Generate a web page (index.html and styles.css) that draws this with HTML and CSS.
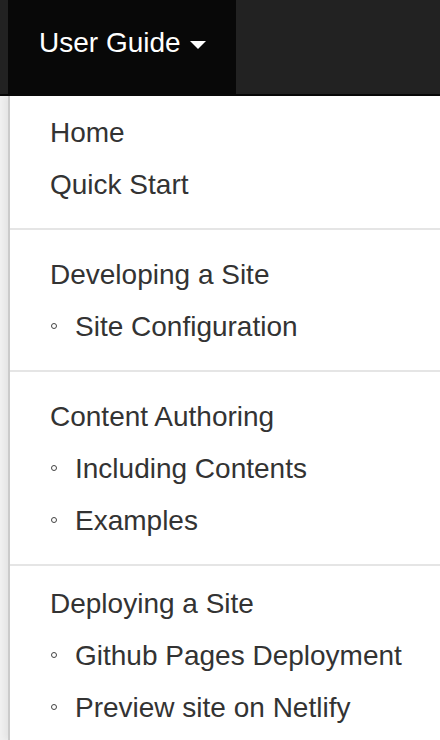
FILE: index.html
```html
<!DOCTYPE html>
<html lang="en">
<head>
<meta charset="utf-8">
<title>User Guide</title>
<link rel="stylesheet" href="styles.css">
</head>
<body>
<header class="navbar">
  <div class="nav-item nav-item--active">
    <a class="nav-link" href="#">User Guide <span class="caret"></span></a>
  </div>
</header>
<ul class="dropdown">
  <li><a class="dropdown-link" href="#">Home</a></li>
  <li><a class="dropdown-link" href="#">Quick Start</a></li>
  <li class="divider"></li>
  <li><a class="dropdown-link" href="#">Developing a Site</a></li>
  <li><a class="dropdown-link" href="#"><span class="bullet"></span>Site Configuration</a></li>
  <li class="divider"></li>
  <li><a class="dropdown-link" href="#">Content Authoring</a></li>
  <li><a class="dropdown-link" href="#"><span class="bullet"></span>Including Contents</a></li>
  <li><a class="dropdown-link" href="#"><span class="bullet"></span>Examples</a></li>
  <li class="divider divider--tight"></li>
  <li><a class="dropdown-link" href="#">Deploying a Site</a></li>
  <li><a class="dropdown-link" href="#"><span class="bullet"></span>Github Pages Deployment</a></li>
  <li><a class="dropdown-link" href="#"><span class="bullet"></span>Preview site on Netlify</a></li>
</ul>
</body>
</html>
```
FILE: styles.css
```css
html, body {
  margin: 0;
  padding: 0;
}
html {
  overflow: hidden;
}
body {
  background: #f1f1f1;
  font-family: "Liberation Sans", Arial, Helvetica, sans-serif;
  font-size: 28px;
  line-height: 40px;
  color: #333;
  overflow: hidden;
  height: 740px;
}
.navbar {
  display: flex;
  background: #222;
  height: 94px;
  border-bottom: 2px solid #080808;
  padding-left: 8px;
}
.nav-item--active {
  background: #080808;
  height: 96px;
}
.nav-link {
  display: block;
  padding: 23px 30px 31px 31px;
  color: #fff;
  text-decoration: none;
  white-space: nowrap;
}
.caret {
  display: inline-block;
  width: 0;
  height: 0;
  margin-left: 2px;
  border-top: 8px solid #fff;
  border-left: 8px solid transparent;
  border-right: 8px solid transparent;
  vertical-align: 3px;
}
.dropdown {
  list-style: none;
  margin: 0 0 0 8px;
  padding: 10px 0 7px;
  background: #fff;
  border-left: 2px solid #cbcbcb;
  box-shadow: -4px 0 6px rgba(0, 0, 0, 0.05);
}
.dropdown-link {
  display: block;
  padding: 7px 40px 5px 40px;
  color: #333;
  text-decoration: none;
  white-space: nowrap;
}
.bullet {
  display: inline-block;
  box-sizing: border-box;
  width: 6px;
  height: 6px;
  border: 1px solid #444;
  border-radius: 50%;
  margin-left: 1px;
  margin-right: 18px;
  vertical-align: 7px;
}
.divider {
  height: 2px;
  margin: 18px 0;
  background: #e5e5e5;
}
.divider--tight {
  margin-bottom: 11px;
}
```
